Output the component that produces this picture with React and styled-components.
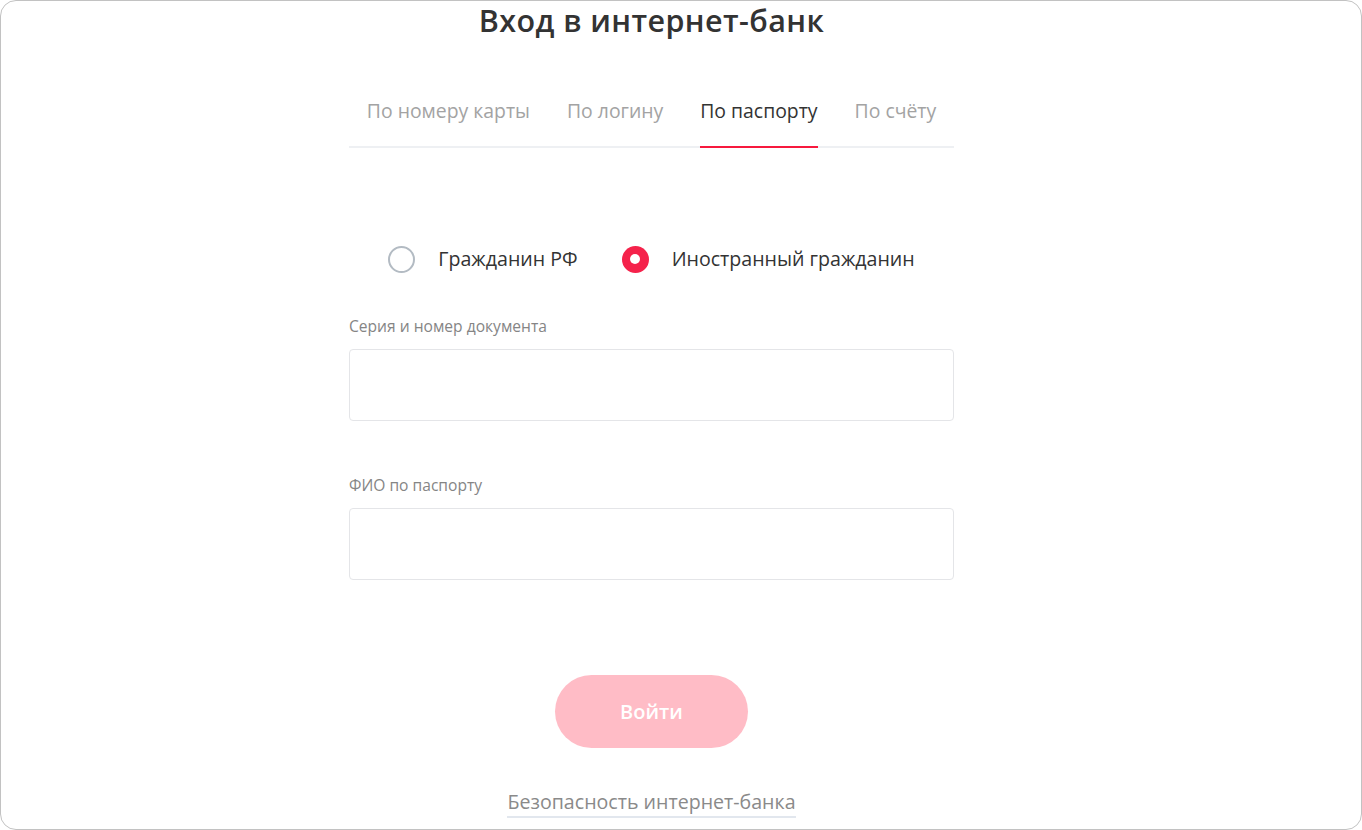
import React, { useState } from "react";
import styled, { createGlobalStyle } from "styled-components";

const GlobalStyle = createGlobalStyle`
  html, body {
    margin: 0;
    padding: 0;
    background: #ffffff;
  }
  body {
    font-family: "Open Sans", "Noto Sans", Arial, sans-serif;
  }
  * {
    box-sizing: border-box;
  }
`;

const tabs = ["По номеру карты", "По логину", "По паспорту", "По счёту"];

const App = () => {
  const [activeTab, setActiveTab] = useState(2);
  const [citizen, setCitizen] = useState("foreign");

  return (
    <Frame>
      <GlobalStyle />
      <Column>
        <Title>Вход в интернет-банк</Title>

        <TabList>
          {tabs.map((tab, i) => (
            <Tab key={tab} $active={i === activeTab} onClick={() => setActiveTab(i)}>
              {tab}
            </Tab>
          ))}
        </TabList>

        <RadioRow>
          <RadioOption onClick={() => setCitizen("rf")}>
            <RadioMark $checked={citizen === "rf"} />
            Гражданин РФ
          </RadioOption>
          <RadioOption onClick={() => setCitizen("foreign")}>
            <RadioMark $checked={citizen === "foreign"} />
            Иностранный гражданин
          </RadioOption>
        </RadioRow>

        <Field $top={41}>
          <Label>Серия и номер документа</Label>
          <Input type="text" />
        </Field>

        <Field $top={53}>
          <Label>ФИО по паспорту</Label>
          <Input type="text" />
        </Field>

        <Submit disabled>Войти</Submit>

        <SecurityLink href="#">Безопасность интернет-банка</SecurityLink>
      </Column>
    </Frame>
  );
};

export default App;

const Frame = styled.div`
  width: 1362px;
  height: 830px;
  border: 1px solid #c2c2c2;
  border-radius: 16px;
  overflow: hidden;
  background: #fff;
  padding-left: 348px;
`;

const Column = styled.div`
  width: 605px;
  display: flex;
  flex-direction: column;
`;

const Title = styled.h1`
  margin: 0;
  font-size: 30.5px;
  line-height: 38px;
  font-weight: 600;
  color: #333333;
  text-align: center;
  letter-spacing: 0.4px;
`;

const TabList = styled.div`
  margin-top: 58px;
  display: flex;
  justify-content: center;
  gap: 37px;
  border-bottom: 2px solid #eef0f3;
`;

const Tab = styled.div`
  font-size: 19.4px;
  line-height: 28px;
  padding-bottom: 21px;
  margin-bottom: -2px;
  color: ${(p) => (p.$active ? "#333333" : "#a3a3a3")};
  border-bottom: 2px solid ${(p) => (p.$active ? "#f7193e" : "transparent")};
  cursor: pointer;
  white-space: nowrap;
`;

const RadioRow = styled.div`
  margin-top: 96px;
  display: flex;
  justify-content: center;
  gap: 44px;
`;

const RadioOption = styled.label`
  display: flex;
  align-items: center;
  gap: 23px;
  font-size: 19.6px;
  line-height: 30px;
  color: #333;
  cursor: pointer;
`;

const RadioMark = styled.span`
  width: 27px;
  height: 27px;
  border-radius: 50%;
  flex-shrink: 0;
  display: flex;
  align-items: center;
  justify-content: center;
  border: ${(p) => (p.$checked ? "none" : "2px solid #b3bbc3")};
  background: ${(p) => (p.$checked ? "#f5224b" : "#fff")};

  &::after {
    content: "";
    display: ${(p) => (p.$checked ? "block" : "none")};
    width: 10px;
    height: 10px;
    border-radius: 50%;
    background: #fff;
  }
`;

const Field = styled.div`
  margin-top: ${(p) => p.$top}px;
  display: flex;
  flex-direction: column;
  gap: 12px;
`;

const Label = styled.div`
  font-size: 15.6px;
  line-height: 22px;
  color: #858585;
`;

const Input = styled.input`
  width: 100%;
  height: 72px;
  border: 1px solid #e4e5e8;
  border-radius: 4px;
  padding: 0 16px;
  font-family: inherit;
  font-size: 18px;
  outline: none;
`;

const Submit = styled.button`
  margin: 95px auto 0;
  width: 193px;
  height: 73px;
  border: none;
  border-radius: 37px;
  background: #ffbcc6;
  color: #fff;
  font-family: inherit;
  font-size: 20px;
  font-weight: 600;
`;

const SecurityLink = styled.a`
  margin: 40px auto 0;
  font-size: 19.6px;
  line-height: 28px;
  color: #8a8a8a;
  text-decoration: none;
  border-bottom: 2px solid #e2e7ee;
`;
